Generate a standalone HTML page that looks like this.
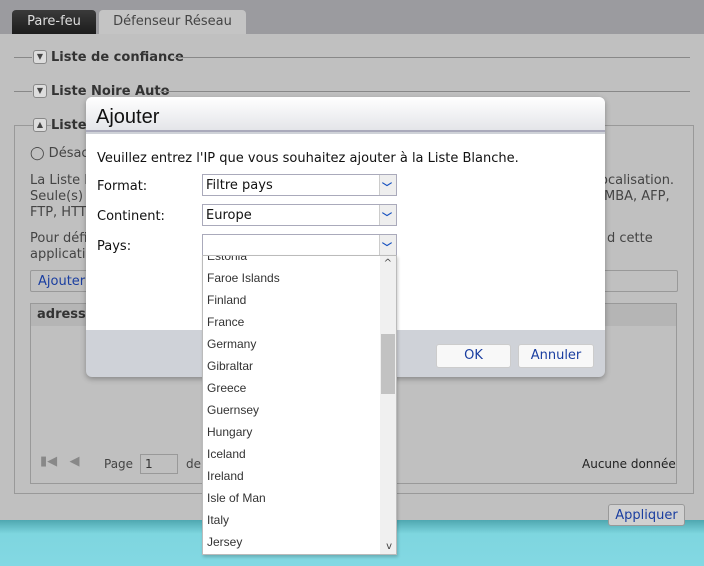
<!DOCTYPE html>
<html><head><meta charset="utf-8"><style>
*{box-sizing:border-box;margin:0;padding:0}
body{width:704px;height:566px;overflow:hidden;position:relative;background:#c0c0c0;font-family:"DejaVu Sans","Liberation Sans",sans-serif;font-size:13px;color:#333}
.abs{position:absolute}
.top{left:0;top:0;width:704px;height:34px;background:#9b9b9f}
.tab1{left:12px;top:10px;width:84px;height:24px;background:linear-gradient(#3a3a3a,#1c1c1c);color:#ddd;border-radius:4px 4px 0 0;text-align:center;line-height:24px}
.tab2{left:99px;top:10px;width:147px;height:24px;background:#c4c4c4;color:#444;border-radius:4px 4px 0 0;text-align:center;line-height:24px}
.line{height:1px;background:#888}
.sec{font-weight:bold;color:#333}
.btnico{width:14px;height:14px;border:1px solid #888;border-radius:3px;background:#ddd;font-size:8px;line-height:12px;text-align:center;color:#444}
.t{color:#444;white-space:nowrap}
.dlg{left:86px;top:97px;width:519px;height:280px;border-radius:6px;background:#cfd2d8;box-shadow:0 2px 6px rgba(0,0,0,.3);overflow:hidden}
.dh{height:35px;background:linear-gradient(#fff,#e4e5e9);border-bottom:2px solid #aab;font-size:20px;padding:9px 10px;color:#111;font-family:"Liberation Sans",sans-serif}
.db{position:absolute;left:0;top:37px;width:519px;height:196px;background:#fff}
.sel{position:absolute;left:202px;width:195px;height:22px;border:1px solid #aab;background:#fff;padding:3px 3px;color:#111}
.sel:after{content:"";position:absolute;right:0;top:0;width:16px;height:20px;background:#eee;border-left:1px solid #ccc}
.chev{position:absolute;right:4px;top:4px;z-index:2;color:#1550c0;font-size:10px;font-weight:bold}
.lbl{position:absolute;left:97px;color:#111}
.btn{position:absolute;top:344px;height:24px;background:#f8f8f8;border:1px solid #ccc;border-radius:3px;color:#1a3ea0;text-align:center;line-height:22px}
.list{left:202px;top:255px;width:195px;height:300px;background:#fff;border:1px solid #bbb;box-shadow:1px 2px 3px rgba(0,0,0,.2);overflow:hidden}
.list div.i{height:22px;line-height:22px;padding-left:4px;font-size:12px;color:#333;font-family:"Liberation Sans Narrow","Liberation Sans",sans-serif}
</style></head><body>
<div class="abs top"></div>
<div class="abs tab1">Pare-feu</div>
<div class="abs tab2">Défenseur Réseau</div>
<div class="abs line" style="left:14px;top:57px;width:18px"></div>
<div class="abs btnico" style="left:33px;top:50px">▼</div>
<div class="abs sec" style="left:51px;top:50px">Liste de confiance</div>
<div class="abs line" style="left:174px;top:57px;width:516px"></div>
<div class="abs line" style="left:14px;top:91px;width:18px"></div>
<div class="abs btnico" style="left:33px;top:84px">▼</div>
<div class="abs sec" style="left:51px;top:84px">Liste Noire Auto</div>
<div class="abs line" style="left:160px;top:91px;width:530px"></div>
<div class="abs" style="left:14px;top:125px;width:680px;height:369px;border:1px solid #999"></div>
<div class="abs btnico" style="left:33px;top:118px">▲</div>
<div class="abs sec" style="left:51px;top:118px;background:#c0c0c0">Listes</div>
<div class="abs t" style="left:30px;top:146px">◯ Désac</div>
<div class="abs t" style="left:30px;top:173px;line-height:16px">La Liste I<br>Seule(s)<br>FTP, HTTP</div>
<div class="abs t" style="left:30px;top:231px;line-height:16px">Pour défi<br>applicatio</div>
<div class="abs t" style="left:600px;top:173px">ocalisation.</div>
<div class="abs t" style="left:604px;top:189px">MBA, AFP,</div>
<div class="abs t" style="left:607px;top:231px">d cette</div>
<div class="abs" style="left:30px;top:270px;width:648px;height:22px;border:1px solid #999;border-radius:2px"></div>
<div class="abs t" style="left:38px;top:274px;color:#1a3ea0">Ajouter</div>
<div class="abs" style="left:30px;top:303px;width:647px;height:181px;border:1px solid #999"></div>
<div class="abs" style="left:31px;top:304px;width:645px;height:22px;background:#b5b5b5"></div>
<div class="abs sec" style="left:37px;top:307px">adresse</div>
<div class="abs t" style="left:104px;top:457px;font-size:12px">Page</div>
<div class="abs" style="left:140px;top:454px;width:38px;height:20px;border:1px solid #999;font-size:12px;padding:2px 4px">1</div>
<div class="abs t" style="left:186px;top:457px;font-size:12px">de</div>
<div class="abs t" style="left:40px;top:454px;color:#888">▮◀ &nbsp; ◀</div>
<div class="abs t" style="left:582px;top:457px;font-size:12px;color:#222">Aucune donnée</div>
<div class="abs" style="left:0;top:520px;width:704px;height:46px;background:linear-gradient(#4fa7b0,#7ed6df 30%,#83d8e3)"></div>
<div class="abs" style="left:608px;top:504px;width:77px;height:22px;border:1px solid #999;border-radius:3px;background:#d0d0d0;color:#1a3ea0;text-align:center;line-height:22px">Appliquer</div>
<div class="abs dlg">
<div class="dh">Ajouter</div>
<div class="db"></div>
</div>
<div class="abs t" style="left:97px;top:151px;color:#111">Veuillez entrez l'IP que vous souhaitez ajouter à la Liste Blanche.</div>
<div class="lbl" style="top:179px">Format:</div>
<div class="sel" style="top:174px">Filtre pays<span class="chev">﹀</span></div>
<div class="lbl" style="top:209px">Continent:</div>
<div class="sel" style="top:204px">Europe<span class="chev">﹀</span></div>
<div class="lbl" style="top:239px">Pays:</div>
<div class="sel" style="top:234px"><span class="chev">﹀</span></div>
<div class="btn" style="left:436px;width:75px">OK</div>
<div class="btn" style="left:518px;width:76px">Annuler</div>
<div class="abs list">
<div style="position:absolute;right:0;top:0;width:16px;height:300px;background:#f0f0f0"></div>
<div style="position:absolute;right:1px;top:78px;width:14px;height:60px;background:#c2c2c2"></div>
<div style="position:absolute;right:4px;top:2px;font-size:10px;color:#444">^</div>
<div style="position:absolute;right:4px;bottom:2px;font-size:10px;color:#444">v</div>
<div style="margin-top:-11px">
<div class="i">Estonia</div><div class="i">Faroe Islands</div><div class="i">Finland</div><div class="i">France</div><div class="i">Germany</div><div class="i">Gibraltar</div><div class="i">Greece</div><div class="i">Guernsey</div><div class="i">Hungary</div><div class="i">Iceland</div><div class="i">Ireland</div><div class="i">Isle of Man</div><div class="i">Italy</div><div class="i">Jersey</div>
</div></div>
</body></html>
